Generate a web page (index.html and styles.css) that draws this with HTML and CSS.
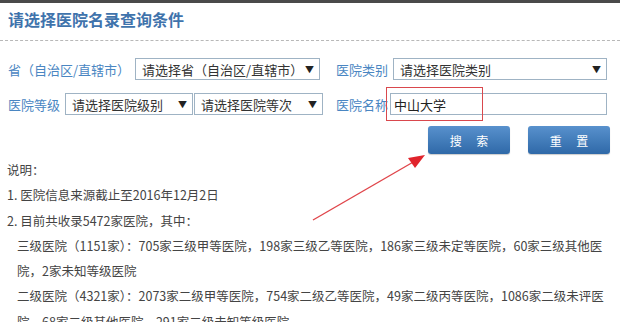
FILE: index.html
```html
<!DOCTYPE html>
<html lang="zh-CN">

<head>
    <meta charset="UTF-8">
    <meta name="viewport" content="width=device-width, initial-scale=1.0">
    <title>医院名录查询</title>
    <link rel="stylesheet" href="styles.css">
</head>

<body>
    <div class="top-bar"></div>

    <div class="page">
        <h1 class="title">请选择医院名录查询条件</h1>

        <form class="query-form">
            <div class="form-grid">
                <div class="field">
                    <label>省（自治区/直辖市）</label>
                    <div class="select select-province"><span>请选择省（自治区/直辖市）</span><i>▼</i></div>
                </div>
                <div class="field">
                    <label>医院类别</label>
                    <div class="select select-wide"><span>请选择医院类别</span><i>▼</i></div>
                </div>
                <div class="field">
                    <label>医院等级</label>
                    <div class="select select-half"><span>请选择医院级别</span><i>▼</i></div>
                    <div class="select select-half"><span>请选择医院等次</span><i>▼</i></div>
                </div>
                <div class="field field-name">
                    <label>医院名称</label>
                    <input type="text" class="text-input" value="中山大学">
                    <div class="highlight-box"></div>
                </div>
            </div>

            <div class="actions">
                <button type="button" class="btn">搜 索</button>
                <button type="button" class="btn">重 置</button>
            </div>
        </form>

        <svg class="arrow" width="130" height="80" viewBox="0 0 130 80">
            <line x1="6" y1="74" x2="108" y2="15" stroke="#e0454a" stroke-width="1.4" />
            <polygon points="118,9 101,12 108,22" fill="#e0242c" />
        </svg>

        <div class="notes">
            <p>说明：</p>
            <p>1. 医院信息来源截止至2016年12月2日</p>
            <p>2. 目前共收录5472家医院，其中：</p>
            <p class="indent">三级医院（1151家）：705家三级甲等医院，198家三级乙等医院，186家三级未定等医院，60家三级其他医院，2家未知等级医院</p>
            <p class="indent">二级医院（4321家）：2073家二级甲等医院，754家二级乙等医院，49家二级丙等医院，1086家二级未评医院，68家二级其他医院，291家二级未知等级医院</p>
        </div>
    </div>
</body>

</html>
```

FILE: styles.css
```css
body {
    margin: 0;
    font-family: "Noto Sans CJK SC", "Noto Sans", sans-serif;
    background-color: #fff;
    color: #333;
    overflow: hidden;
}

.top-bar {
    height: 3px;
    background-color: #4a4a4a;
}

.page {
    position: relative;
}

.title {
    margin: 0;
    padding: 5px 8px 10px;
    font-size: 16px;
    line-height: 22px;
    font-weight: bold;
    color: #3f73ac;
    border-bottom: 1px dashed #b8b8b8;
}

.query-form {
    padding: 17px 0 0 8px;
}

.form-grid {
    display: grid;
    grid-template-columns: 328px 273px;
    row-gap: 13px;
}

.field {
    display: flex;
    align-items: center;
    height: 22px;
    position: relative;
}

.field label {
    font-size: 13px;
    color: #4a86c2;
    margin-right: 5px;
    white-space: nowrap;
}

.select {
    display: flex;
    align-items: center;
    justify-content: space-between;
    box-sizing: border-box;
    height: 22px;
    padding: 0 5px 0 6px;
    border: 1px solid #9fb3c4;
    font-size: 13px;
    color: #333;
    background-color: #fff;
}

.select i {
    font-style: normal;
    font-size: 9px;
    color: #222;
}

.select-province {
    width: 185px;
}

.select-wide {
    width: 214px;
}

.select-half {
    width: 128px;
}

.select-half + .select-half {
    margin-left: 1px;
    width: 129px;
}

.text-input {
    box-sizing: border-box;
    width: 217px;
    height: 22px;
    margin: 0 0 0 -3px;
    padding: 0 3px;
    border: 1px solid #9fb3c4;
    font-family: inherit;
    font-size: 13px;
    color: #222;
    outline: none;
}

.highlight-box {
    position: absolute;
    left: 50px;
    top: -6px;
    width: 95px;
    height: 32px;
    border: 1.5px solid #d9484d;
}

.actions {
    display: flex;
    justify-content: flex-end;
    gap: 18px;
    padding: 11px 10px 0 0;
}

.btn {
    width: 82px;
    height: 28px;
    border: none;
    border-radius: 3px;
    background: linear-gradient(#5891cd, #2f69a8);
    color: #fff;
    font-family: inherit;
    font-size: 12px;
    letter-spacing: 6px;
    text-indent: 6px;
    cursor: pointer;
    box-shadow: 0 1px 1px rgba(0, 0, 0, 0.2);
}

.arrow {
    position: absolute;
    left: 307px;
    top: 143px;
}

.notes {
    padding: 3px 14px 0 7px;
    font-size: 12.5px;
    line-height: 25.3px;
    color: #444;
}

.notes p {
    margin: 0;
}

.notes .indent {
    padding-left: 10px;
}
```
